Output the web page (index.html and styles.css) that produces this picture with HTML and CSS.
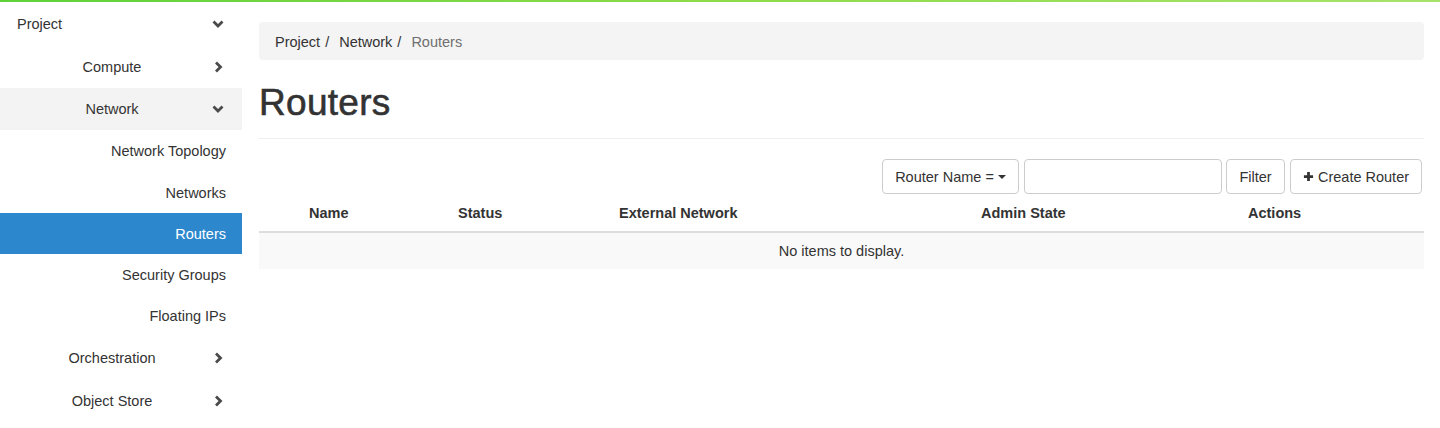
FILE: index.html
```html
<!DOCTYPE html>
<html lang="en">
<head>
<meta charset="utf-8">
<title>Routers</title>
<link rel="stylesheet" href="styles.css">
</head>
<body>
<div class="topbar"></div>
<div class="layout">
  <nav class="sidebar">
    <div class="nav-row nav-top">
      <span class="nav-label">Project</span>
      <svg class="chev" viewBox="0 0 12 12"><path d="M1.5 3.5 L6 8 L10.5 3.5"/></svg>
    </div>
    <div class="nav-row nav-group">
      <span class="nav-label">Compute</span>
      <svg class="chev" viewBox="0 0 12 12"><path d="M4 1.5 L8.5 6 L4 10.5"/></svg>
    </div>
    <div class="nav-row nav-group open">
      <span class="nav-label">Network</span>
      <svg class="chev" viewBox="0 0 12 12"><path d="M1.5 3.5 L6 8 L10.5 3.5"/></svg>
    </div>
    <div class="nav-row nav-item first">Network Topology</div>
    <div class="nav-row nav-item">Networks</div>
    <div class="nav-row nav-item active">Routers</div>
    <div class="nav-row nav-item">Security Groups</div>
    <div class="nav-row nav-item">Floating IPs</div>
    <div class="nav-row nav-group">
      <span class="nav-label">Orchestration</span>
      <svg class="chev" viewBox="0 0 12 12"><path d="M4 1.5 L8.5 6 L4 10.5"/></svg>
    </div>
    <div class="nav-row nav-group">
      <span class="nav-label">Object Store</span>
      <svg class="chev" viewBox="0 0 12 12"><path d="M4 1.5 L8.5 6 L4 10.5"/></svg>
    </div>
  </nav>
  <main class="main">
    <ol class="breadcrumb">
      <li>Project</li>
      <li class="sep">/</li>
      <li>Network</li>
      <li class="sep">/</li>
      <li class="current">Routers</li>
    </ol>
    <h1 class="page-header">Routers</h1>
    <div class="toolbar">
      <button class="btn">Router Name = <span class="caret"></span></button>
      <input class="search" type="text">
      <button class="btn">Filter</button>
      <button class="btn"><svg class="plus" viewBox="0 0 12 12"><path d="M6 1 V11 M1 6 H11"/></svg>Create Router</button>
    </div>
    <div class="table">
      <div class="thead">
        <div class="th c0"></div>
        <div class="th c1">Name</div>
        <div class="th c2">Status</div>
        <div class="th c3">External Network</div>
        <div class="th c4">Admin State</div>
        <div class="th c5">Actions</div>
      </div>
      <div class="empty">No items to display.</div>
    </div>
  </main>
</div>
</body>
</html>
```

FILE: styles.css
```css
* { box-sizing: border-box; }
html, body { margin: 0; padding: 0; background: #fff; }
body {
  font-family: "Liberation Sans", Arial, Helvetica, sans-serif;
  font-size: 14.5px;
  color: #333;
  line-height: 20px;
}
.topbar {
  height: 2px;
  background: linear-gradient(to right, #5fd23a, #8ddb4a 50%, #a6e36a);
}
.layout {
  display: flex;
}
.sidebar {
  width: 242px;
  flex: none;
  display: flex;
  flex-direction: column;
}
.nav-row {
  display: flex;
  align-items: center;
}
.nav-top, .nav-group { height: 43px; padding: 0 18px 0 12px; }
.nav-top { padding-left: 17px; }
.nav-group.open { background: #f3f3f3; height: 42px; }
.nav-label { flex: 1; }
.nav-group .nav-label { text-align: center; }
.nav-top .nav-label { text-align: left; }
.chev {
  width: 12px;
  height: 12px;
  flex: none;
  fill: none;
  stroke: #4a4a4a;
  stroke-width: 2.8;
  stroke-linecap: butt;
  stroke-linejoin: miter;
}
.nav-item {
  height: 41px;
  justify-content: flex-end;
  padding-right: 16px;
}
.nav-item.first { height: 42px; }
.nav-item.active {
  background: #2d87cd;
  color: #fff;
}
.main {
  flex: 1;
  padding: 20px 16px 0 17px;
  min-width: 0;
}
.breadcrumb {
  list-style: none;
  margin: 0;
  height: 38px;
  padding: 1px 16px 0;
  display: flex;
  align-items: center;
  background: #f4f4f4;
  border-radius: 4px;
}
.breadcrumb li { white-space: pre; }
.breadcrumb .sep { padding: 0 10px 0 5px; color: #333; }
.breadcrumb .current { color: #6f6f6f; }
.page-header {
  margin: 23px 0 0;
  padding-bottom: 15px;
  font-size: 37px;
  line-height: 40px;
  font-weight: 500;
  letter-spacing: 0.3px;
  -webkit-text-stroke: 0.6px #333;
  color: #333;
  border-bottom: 1px solid #eee;
}
.toolbar {
  display: flex;
  justify-content: flex-end;
  gap: 5px;
  margin-top: 20px;
  padding-right: 2px;
}
.btn {
  height: 35px;
  padding: 0 10px;
  border: 1px solid #ccc;
  border-radius: 4px;
  background: #fff;
  font: inherit;
  color: #333;
  display: flex;
  align-items: center;
  white-space: nowrap;
}
.btn:nth-child(1) { width: 137px; justify-content: center; }
.btn:nth-child(3) { width: 59px; justify-content: center; margin-left: -1px; }
.btn:nth-child(4) { width: 132px; justify-content: center; }
.caret {
  display: inline-block;
  width: 0;
  height: 0;
  margin-left: 4px;
  border-left: 4px solid transparent;
  border-right: 4px solid transparent;
  border-top: 4px solid #333;
}
.search {
  width: 198px;
  height: 35px;
  border: 1px solid #ccc;
  border-radius: 4px;
  font: inherit;
  padding: 0 10px;
}
.plus {
  width: 11px;
  height: 11px;
  margin-right: 4px;
  fill: none;
  stroke: #333;
  stroke-width: 3;
}
.thead {
  display: grid;
  grid-template-columns: 42px 149px 161px 362px 267px 1fr;
  height: 39px;
  border-bottom: 2px solid #ddd;
  align-items: center;
}
.th {
  font-weight: bold;
  padding: 0 8px;
}
.empty {
  height: 36px;
  background: #f9f9f9;
  display: flex;
  align-items: center;
  justify-content: center;
}
```
